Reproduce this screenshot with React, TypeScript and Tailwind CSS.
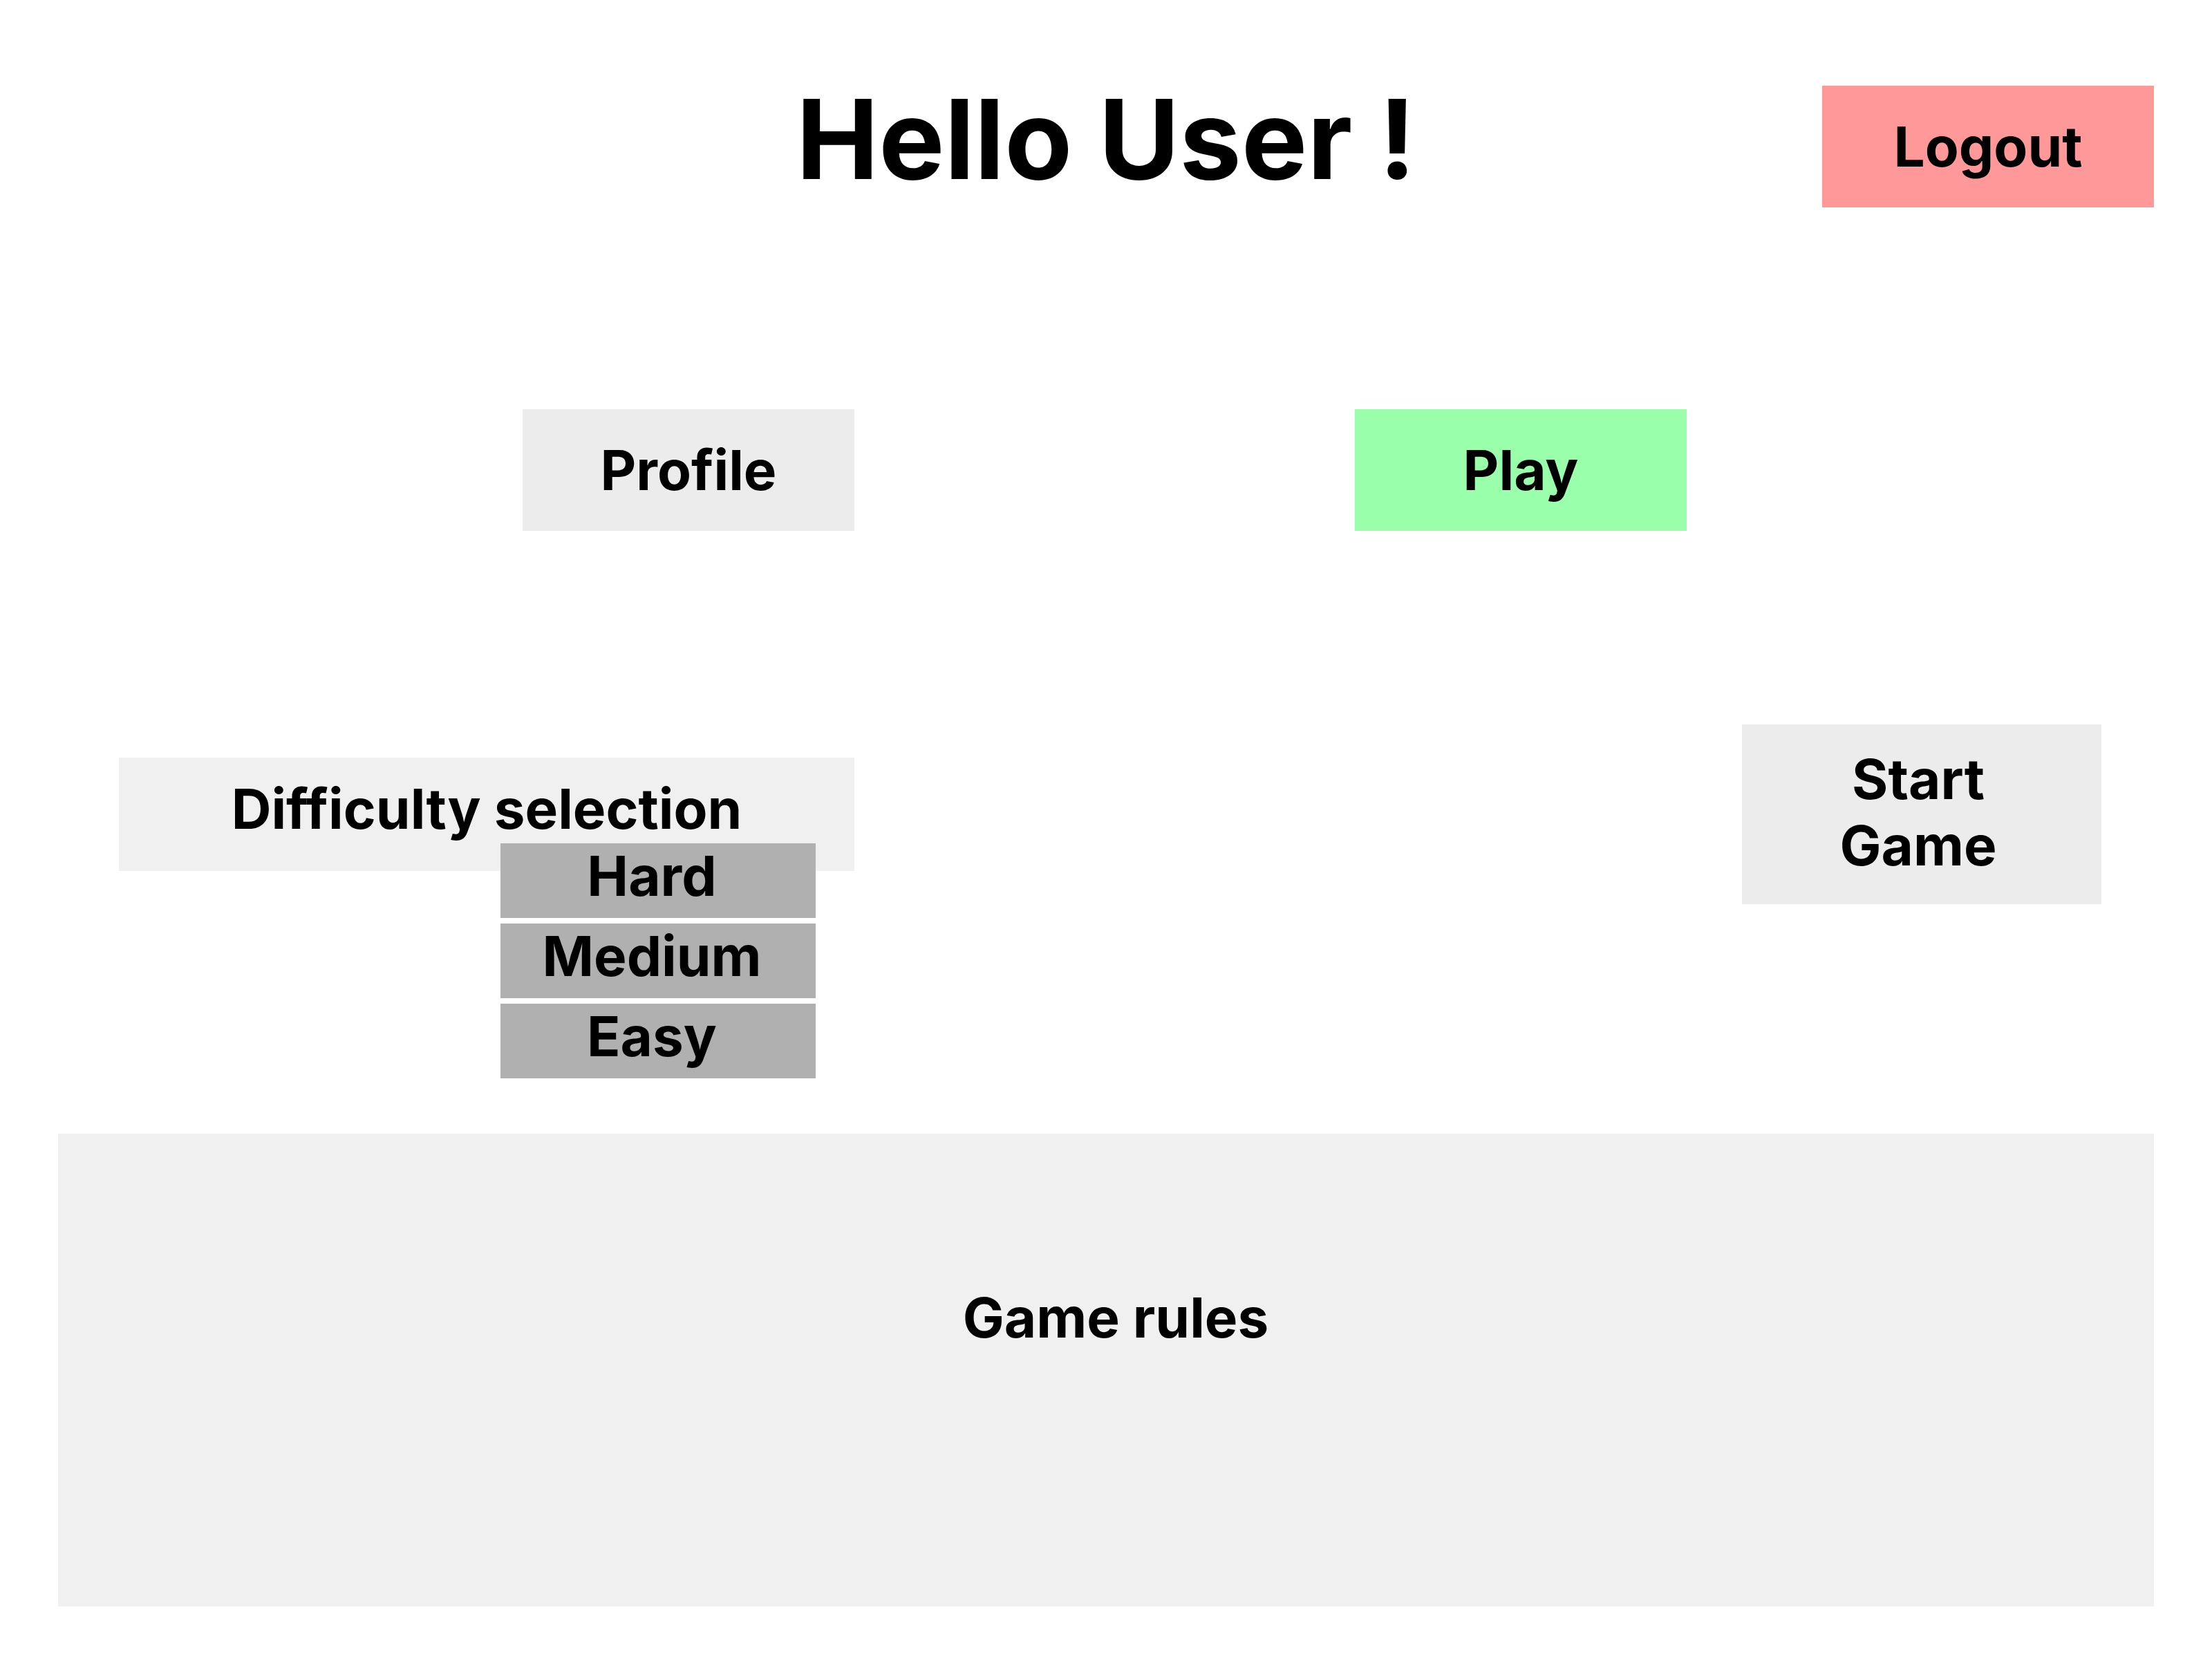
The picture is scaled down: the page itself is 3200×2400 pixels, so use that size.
import React from "react";

export default function App() {
  return (
    <div
      className="relative w-[3200px] h-[2400px] bg-white text-black font-bold leading-[1.21]"
      style={{ fontFamily: "Inter, 'Noto Sans', sans-serif" }}
    >
      {/* Header */}
      <div className="grid grid-cols-[1fr_auto_1fr] items-start px-[84px] pt-[124px]">
        <div />
        <h1 className="text-[160px] leading-[160px] mt-[-3px]">Hello User !</h1>
        <div className="flex justify-end">
          <button className="w-[480px] h-[176px] bg-[#ff9999] text-[80px] flex items-center justify-center">
            Logout
          </button>
        </div>
      </div>

      {/* Profile / Play */}
      <div className="flex items-start pl-[756px] gap-[724px] mt-[292px]">
        <button className="w-[480px] h-[176px] bg-[#ececec] text-[80px] flex items-center justify-center">
          Profile
        </button>
        <button className="w-[480px] h-[176px] bg-[#99ffaa] text-[80px] flex items-center justify-center">
          Play
        </button>
      </div>

      {/* Difficulty / Start Game */}
      <div className="flex items-start justify-between pl-[172px] pr-[160px] mt-[280px]">
        <div className="relative mt-[48px] w-[1064px] h-[164px] bg-[#f0f0f0] text-[80px] flex items-center justify-center pb-[16px]">
          Difficulty selection
          <div className="absolute left-[552px] top-[124px] w-[456px] flex flex-col gap-[8px]">
            <div className="h-[108px] bg-[#b0b0b0] flex items-center justify-center pr-[18px] pb-[13px]">Hard</div>
            <div className="h-[108px] bg-[#b0b0b0] flex items-center justify-center pr-[18px] pb-[13px]">Medium</div>
            <div className="h-[108px] bg-[#b0b0b0] flex items-center justify-center pr-[18px] pb-[13px]">Easy</div>
          </div>
        </div>
        <button className="w-[520px] h-[260px] bg-[#ececec] text-[80px] leading-[96px] flex items-center justify-center text-center pr-[10px] pb-[6px]">
          Start
          <br />
          Game
        </button>
      </div>

      {/* Game rules */}
      <div className="mx-[84px] mt-[332px] h-[684px] bg-[#f0f0f0] text-[80px] text-center pt-[218px] pl-[28px]">
        Game rules
      </div>
    </div>
  );
}
